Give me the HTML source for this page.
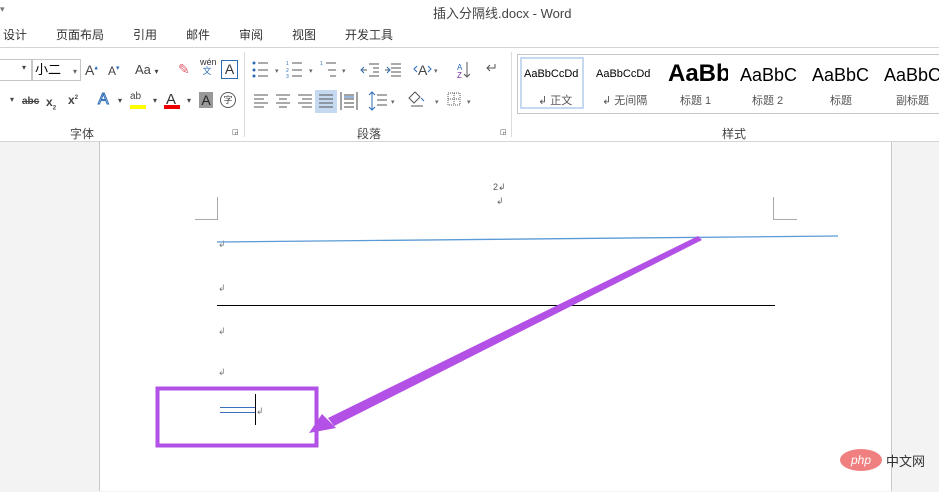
<!DOCTYPE html><html><head><meta charset="utf-8"><style>
body{margin:0;width:939px;height:491px;overflow:hidden;background:#fff;font-family:"Liberation Sans","Noto Sans CJK SC",sans-serif;position:relative;font-size:12px;color:#444}
.a{position:absolute;white-space:nowrap}
.tab{top:26px;font-size:12px;color:#333}
</style></head><body>
<div class="a" style="left:0;top:4px;font-size:9px;color:#777">▾</div>
<div class="a" style="left:433px;top:3px;font-size:13px;color:#444">插入分隔线.docx - Word</div>
<div class="a tab" style="left:3px">设计</div>
<div class="a tab" style="left:56px">页面布局</div>
<div class="a tab" style="left:133px">引用</div>
<div class="a tab" style="left:186px">邮件</div>
<div class="a tab" style="left:239px">审阅</div>
<div class="a tab" style="left:292px">视图</div>
<div class="a tab" style="left:345px">开发工具</div>
<div class="a" style="left:0;top:47px;width:939px;height:1px;background:#d5d5d5"></div>
<!-- font group -->
<div class="a" style="left:-2px;top:59px;width:32px;height:20px;border:1px solid #c6c6c6"></div>
<div class="a" style="left:22px;top:63px;font-size:8px">▾</div>
<div class="a" style="left:32px;top:59px;width:45px;height:20px;border:1px solid #c6c6c6;font-size:13px;color:#000;line-height:20px;padding-left:2px">小二<span style="font-size:8px;color:#666;margin-left:12px">▾</span></div>
<div class="a" style="left:85px;top:62px;font-size:14px">A<sup style="font-size:7px;color:#2b6cb5">▴</sup></div>
<div class="a" style="left:108px;top:64px;font-size:12px">A<sup style="font-size:7px;color:#2b6cb5">▾</sup></div>
<div class="a" style="left:135px;top:62px;font-size:13px">Aa <span style="font-size:8px">▾</span></div>
<div class="a" style="left:178px;top:61px;font-size:14px;color:#e06070">✎</div>
<div class="a" style="left:200px;top:58px;font-size:9px;color:#333;line-height:9px">wén<br><span style="color:#2b6cb5">&nbsp;文</span></div>
<div class="a" style="left:221px;top:60px;width:15px;height:17px;border:1px solid #2b6cb5;font-size:14px;text-align:center;line-height:17px;color:#333">A</div>
<div class="a" style="left:10px;top:95px;font-size:8px">▾</div>
<div class="a" style="left:22px;top:96px;font-size:10px;text-decoration:line-through;font-weight:bold">abc</div>
<div class="a" style="left:46px;top:95px;font-size:12px;font-weight:bold">x<sub style="font-size:6px">2</sub></div>
<div class="a" style="left:68px;top:93px;font-size:12px;font-weight:bold">x<sup style="font-size:6px">2</sup></div>
<div class="a" style="left:98px;top:91px;font-size:16px;color:#fff;-webkit-text-stroke:1px #2b6cb5">A</div><div class="a" style="left:118px;top:96px;font-size:8px">▾</div>
<div class="a" style="left:130px;top:91px;font-size:10px">ab</div><div class="a" style="left:130px;top:105px;width:16px;height:4px;background:#ff0"></div><div class="a" style="left:153px;top:96px;font-size:8px">▾</div>
<div class="a" style="left:166px;top:91px;font-size:15px;color:#333">A</div><div class="a" style="left:164px;top:105px;width:16px;height:4px;background:#e00"></div><div class="a" style="left:187px;top:96px;font-size:8px">▾</div>
<div class="a" style="left:199px;top:92px;width:14px;height:16px;background:#999;color:#222;font-size:14px;text-align:center;line-height:16px">A</div>
<div class="a" style="left:220px;top:92px;width:14px;height:14px;border:1px solid #555;border-radius:50%;font-size:9px;text-align:center;line-height:14px">字</div>
<div class="a" style="left:70px;top:125px;font-size:12px">字体</div>
<div class="a" style="left:232px;top:128px;font-size:7px">◲</div>
<div class="a" style="left:244px;top:52px;width:1px;height:85px;background:#dcdcdc"></div>
<!-- paragraph -->
<div class="a" style="left:315px;top:90px;width:22px;height:23px;background:#c5d9f1"></div>
<svg class="a" style="left:245px;top:50px" width="266" height="70" stroke="#555" fill="none" stroke-width="1">
<g fill="#2b6cb5" stroke="none"><circle cx="9" cy="13" r="1.5"/><circle cx="9" cy="20" r="1.5"/><circle cx="9" cy="26" r="1.5"/></g>
<path d="M13 13h10M13 20h10M13 26h10"/>
<path d="M47 13h10M47 20h10M47 26h10"/><text x="41" y="15" font-size="5" fill="#2b6cb5" stroke="none">1</text><text x="41" y="22" font-size="5" fill="#2b6cb5" stroke="none">2</text><text x="41" y="28" font-size="5" fill="#2b6cb5" stroke="none">3</text>
<path d="M81 13h10M83 20h8M85 26h6"/><text x="75" y="15" font-size="5" fill="#2b6cb5" stroke="none">1</text>
<g fill="#666" stroke="none" font-size="7"><text x="30" y="23">▾</text><text x="64" y="23">▾</text><text x="97" y="23">▾</text><text x="189" y="23">▾</text></g>
<path d="M124 14h10M128 18h6M128 22h6M124 26h10M116 20h6" /><path d="M119 17l-3 3 3 3" stroke="#2b6cb5"/>
<path d="M146 14h10M146 18h10M146 22h10M146 26h10M140 20h5" /><path d="M142 17l3 3-3 3" stroke="#2b6cb5"/>
<text x="173" y="25" font-size="14" fill="#444" stroke="none">A</text><path d="M172 16l-3 3 3 3M183 16l3 3-3 3" stroke="#2b6cb5"/>
<text x="212" y="20" font-size="8" fill="#2b6cb5" stroke="none">A</text><text x="212" y="28" font-size="8" fill="#7030a0" stroke="none">Z</text><path d="M222 12v15M219 24l3 3 3-3"/>
<path d="M250 14v4h-8M245 15l-3 3 3 3"/>
<path d="M9 45h14M9 49h10M9 53h14M9 57h10"/>
<path d="M31 45h14M34 49h8M31 53h14M34 57h8"/>
<path d="M53 45h14M57 49h10M53 53h14M57 57h10"/>
<path d="M74 45h14M74 49h14M74 53h14M74 57h14"/>
<path d="M96 42v18M112 42v18M99 45h10M99 49h10M99 53h10M99 57h10" stroke="#444"/><path d="M99 47h10" stroke="#2b6cb5"/>
<path d="M132 45h10M132 50h10M132 55h10"/><path d="M127 42v18M124 45l3-3 3 3M124 57l3 3 3-3" stroke="#2b6cb5"/>
<g fill="#666" stroke="none" font-size="7"><text x="146" y="54">▾</text><text x="190" y="54">▾</text><text x="222" y="54">▾</text></g>
<path d="M170 42l-6 6 5 5 6-6zM166 56h12" /><path d="M176 48l3 3" stroke="#2b6cb5"/>
<path d="M203 43h12v12h-12z" stroke-dasharray="1 1"/><path d="M209 43v12M203 49h12" stroke-dasharray="1 1"/>
</svg>
<div class="a" style="left:357px;top:125px;font-size:12px">段落</div>
<div class="a" style="left:500px;top:128px;font-size:7px">◲</div>
<div class="a" style="left:511px;top:52px;width:1px;height:85px;background:#dcdcdc"></div>
<!-- styles -->
<div class="a" style="left:517px;top:54px;width:430px;height:58px;border:1px solid #c6c6c6"></div>
<div class="a" style="left:520px;top:57px;width:64px;height:52px;border:2px solid #c5d9f1;box-sizing:border-box"></div>
<div class="a" style="left:524px;top:68px;font-size:11px;color:#000">AaBbCcDd</div>
<div class="a" style="left:538px;top:92px;font-size:11px;color:#555">↲ 正文</div>
<div class="a" style="left:596px;top:68px;font-size:11px;color:#000">AaBbCcDd</div>
<div class="a" style="left:602px;top:92px;font-size:11px;color:#555">↲ 无间隔</div>
<div class="a" style="left:668px;top:60px;font-size:24px;font-weight:bold;color:#000;width:60px;overflow:hidden">AaBb</div>
<div class="a" style="left:680px;top:92px;font-size:11px;color:#555">标题 1</div>
<div class="a" style="left:740px;top:65px;font-size:18px;color:#000">AaBbC</div>
<div class="a" style="left:752px;top:92px;font-size:11px;color:#555">标题 2</div>
<div class="a" style="left:812px;top:65px;font-size:18px;color:#000">AaBbC</div>
<div class="a" style="left:830px;top:92px;font-size:11px;color:#555">标题</div>
<div class="a" style="left:884px;top:65px;font-size:18px;color:#000">AaBbC</div>
<div class="a" style="left:896px;top:92px;font-size:11px;color:#555">副标题</div>
<div class="a" style="left:722px;top:125px;font-size:12px">样式</div>
<!-- document area -->
<div class="a" style="left:0;top:141px;width:939px;height:350px;background:#f3f3f3;border-top:1px solid #d5d5d5"></div>
<div class="a" style="left:99px;top:142px;width:791px;height:349px;background:#fff;border-left:1px solid #c8c8c8;border-right:1px solid #c8c8c8"></div>
<div class="a" style="left:493px;top:182px;font-size:9px;color:#555">2↲</div>
<div class="a" style="left:496px;top:196px;font-size:9px;color:#666">↲</div>
<div class="a" style="left:195px;top:219px;width:22px;height:1px;background:#aaa"></div>
<div class="a" style="left:217px;top:197px;width:1px;height:23px;background:#aaa"></div>
<div class="a" style="left:773px;top:197px;width:1px;height:23px;background:#aaa"></div>
<div class="a" style="left:773px;top:219px;width:24px;height:1px;background:#aaa"></div>
<div class="a" style="left:217px;top:305px;width:558px;height:1px;background:#000"></div>
<div class="a" style="left:218px;top:239px;font-size:9px;color:#777">↲</div>
<div class="a" style="left:218px;top:283px;font-size:9px;color:#777">↲</div>
<div class="a" style="left:218px;top:326px;font-size:9px;color:#777">↲</div>
<div class="a" style="left:218px;top:367px;font-size:9px;color:#777">↲</div>
<div class="a" style="left:220px;top:407px;width:35px;height:1px;background:#3c6ebf"></div>
<div class="a" style="left:220px;top:412px;width:35px;height:1px;background:#3c6ebf"></div>
<div class="a" style="left:255px;top:394px;width:1px;height:31px;background:#000"></div>
<div class="a" style="left:256px;top:406px;font-size:9px;color:#777">↲</div>
<svg class="a" style="left:0;top:0" width="939" height="491">
<line x1="217" y1="242" x2="838" y2="236" stroke="#5b9bd5" stroke-width="1.3"/>
<rect x="157.5" y="388.5" width="159" height="57" fill="none" stroke="#b350e6" stroke-width="4"/>
<polygon points="698,236 702,240 334,426 328,418" fill="#b350e6"/>
<polygon points="309,433 322,414 336,428" fill="#b350e6"/>
</svg>
<svg class="a" style="left:839px;top:448px" width="45" height="24"><ellipse cx="22" cy="12" rx="21" ry="11" fill="#f08080"/><text x="22" y="16" font-size="12" font-style="italic" fill="#fff" text-anchor="middle" font-family="Liberation Sans">php</text></svg>
<div class="a" style="left:886px;top:451px;font-size:13px;color:#333">中文网</div>
</body></html>
